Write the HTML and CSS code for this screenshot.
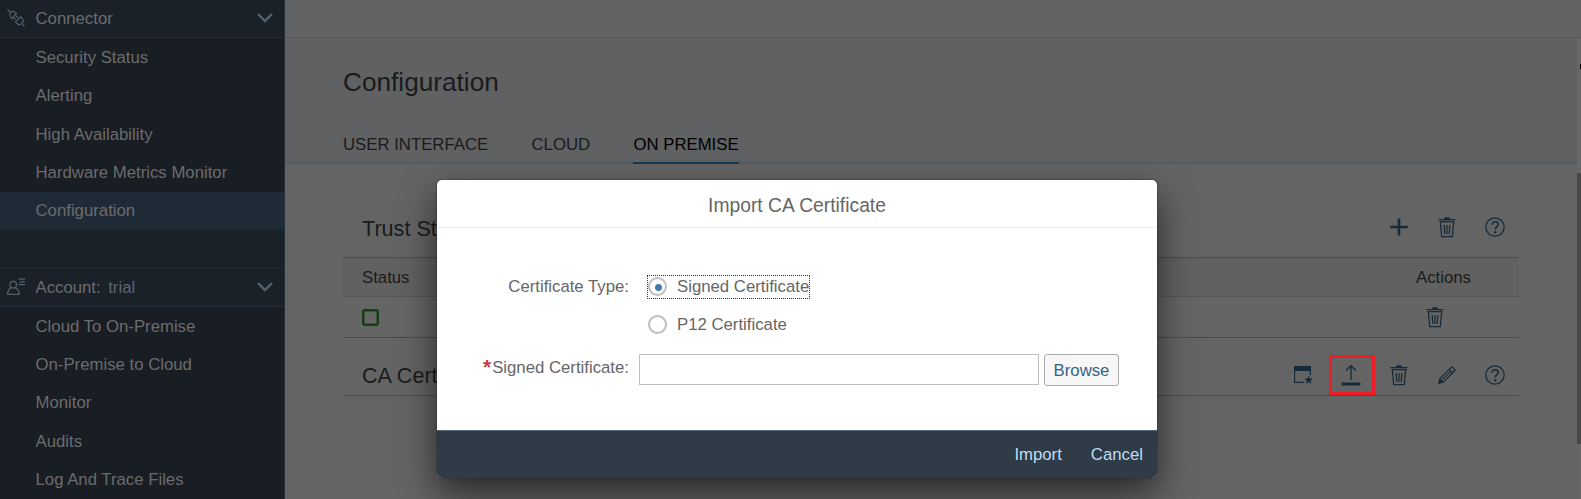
FILE: index.html
```html
<!DOCTYPE html>
<html lang="en">
<head>
<meta charset="utf-8">
<title>Configuration</title>
<link rel="stylesheet" href="styles.css">
</head>
<body>
<svg class="defs" width="0" height="0">
  <symbol id="trash" viewBox="0 0 20 22"><path d="M1.500 3.500h17M3.300 5.500l1.400 15h10.600L16.700 5.500M2.500 5.500h15M7.200 9l.6 9M10 9v9M12.800 9l-.6 9" fill="none" stroke="currentColor" stroke-width="1.250"/><path d="M7 3Q7 1.300 8.500 1.300h3Q13 1.300 13 3z" fill="currentColor"/></symbol>
  <symbol id="help" viewBox="0 0 20 20"><circle cx="10" cy="10" r="9.200" fill="none" stroke="currentColor" stroke-width="1.200"/><path d="M7 7.800C7 3.700 13.200 4 13.200 7.500C13.200 9.800 10.200 9.500 10.200 12.600" fill="none" stroke="currentColor" stroke-width="1.500"/><circle cx="10.200" cy="15.300" r="1.200" fill="currentColor"/></symbol>
</svg>
<div class="app">
  <nav class="sidebar">
    <div class="group">
      <svg class="group-icon" width="18" height="18" viewBox="0 0 18 18" fill="none" stroke="currentColor" stroke-width="1.200"><path d="M.5.5l2.500 2.500M3 6.500C2 4 4.200 1.800 7 2.600L9.300 5 5.200 9.500zM9.300 5l-.2-1.500M5.200 9.500l-1.200.2M7 9l1.700 1.600M9.200 7l1.700 1.500M15.300 15.300l2.200 2.200M8.500 12.900l5-5 2.400 2.500c1 3-1.800 5.800-4.700 5zM8.300 12.700l1 1M13 7.800l1.200.3"/></svg>
      <span class="group-title">Connector</span>
      <svg class="chevron" width="16" height="10" viewBox="0 0 16 10"><path d="M1 1l7 7 7-7" fill="none" stroke="currentColor" stroke-width="2.400"/></svg>
    </div>
    <ul class="items">
      <li>Security Status</li><li>Alerting</li><li>High Availability</li><li>Hardware Metrics Monitor</li><li class="selected">Configuration</li>
    </ul>
    <div class="group account">
      <svg class="group-icon" width="18" height="18" viewBox="0 0 18 18" fill="none" stroke="currentColor" stroke-width="1.200"><circle cx="6.200" cy="6.700" r="3.300"/><path d="M4.700 9.700C2 10.500.7 12.500.7 16.400h11.500C12.200 12.500 10.500 10.500 7.700 9.700M11.500 1.100H18M12.500 3.900H18M11.500 6.700H18"/></svg>
      <span class="group-title">Account:</span><span class="trial">trial</span>
      <svg class="chevron" width="16" height="10" viewBox="0 0 16 10"><path d="M1 1l7 7 7-7" fill="none" stroke="currentColor" stroke-width="2.400"/></svg>
    </div>
    <ul class="items fill">
      <li>Cloud To On-Premise</li><li>On-Premise to Cloud</li><li>Monitor</li><li>Audits</li><li>Log And Trace Files</li>
    </ul>
  </nav>
  <div class="main">
    <div class="topbar"></div>
    <div class="scroller">
      <div class="page">
        <header class="page-header">
          <h1>Configuration</h1>
          <div class="tabs"><span>USER INTERFACE</span><span>CLOUD</span><span class="active">ON PREMISE</span></div>
        </header>
        <section class="content">
          <div class="toolbar trust">
            <h2>Trust Store</h2>
            <span class="tool"><svg width="18" height="18" viewBox="0 0 18 18"><path d="M9 .5v17M.3 9h17.400" stroke="currentColor" stroke-width="2.600"/></svg></span>
            <span class="tool"><svg width="20" height="22"><use href="#trash"/></svg></span>
            <span class="tool"><svg width="20" height="20"><use href="#help"/></svg></span>
          </div>
          <div class="row head"><span>Status</span><span class="actions">Actions</span></div>
          <div class="row"><span class="status"></span><span class="actions icon"><svg width="20" height="22"><use href="#trash"/></svg></span></div>
          <div class="toolbar ca">
            <h2>CA Certificate</h2>
            <span class="tool"><svg width="20" height="20" viewBox="0 0 20 20"><path d="M1.600 2v15.300H11M17.300 4v6" fill="none" stroke="currentColor" stroke-width="1.200"/><path d="M1 1h17v5H1zM15.700 10.500l1.200 3 3.100.2-2.400 2 .8 3.200-2.700-1.800L13 18.900l.8-3.200-2.400-2 3.100-.2z" fill="currentColor"/></svg></span>
            <span class="tool upload"><svg width="20" height="22" viewBox="0 0 20 22"><path d="M10 16V2M5.200 6.500L10 1.700l4.800 4.800" fill="none" stroke="currentColor" stroke-width="1.300"/><rect x=".5" y="18.500" width="19" height="3" rx="1" fill="currentColor"/></svg></span>
            <span class="tool"><svg width="20" height="22"><use href="#trash"/></svg></span>
            <span class="tool"><svg width="18" height="18" viewBox="0 0 18 18" fill="none" stroke="currentColor" stroke-width="1.200"><path d="M1.900 12.600L13.800.8l3.400 3.400L5.400 16.100M11.200 3.400l3.400 3.400M4.200 13.900l8.700-8.700"/><path d="M1.900 13L.6 17.400 5 16.100z" fill="currentColor"/></svg></span>
            <span class="tool"><svg width="20" height="20"><use href="#help"/></svg></span>
          </div>
        </section>
      </div>
      <div class="scrollbar"><div class="mark"></div><div class="thumb"></div></div>
    </div>
  </div>
</div>
<div class="dialog" role="dialog">
  <div class="dialog-title">Import CA Certificate</div>
  <div class="form">
    <span class="label">Certificate Type:</span>
    <div class="radios">
      <span class="radio focused"><i class="ring on"></i>Signed Certificate</span>
      <span class="radio"><i class="ring"></i>P12 Certificate</span>
    </div>
    <div class="label file-label">
      <b>*</b>
      <span>Signed Certificate:</span>
    </div>
    <div class="file"><input class="input" type="text" aria-label="Signed Certificate"><button class="browse">Browse</button></div>
  </div>
  <div class="dialog-footer"><span>Import</span><span>Cancel</span></div>
</div>
</body>
</html>
```
FILE: styles.css
```css
* { box-sizing: border-box; }
body { margin: 0; width: 1581px; height: 499px; overflow: hidden; font: 16.75px "Liberation Sans", Arial, sans-serif; }
.defs { position: absolute; }
svg { display: block; flex: none; }
.app { display: flex; height: 499px; }

.sidebar { width: 285px; flex: none; display: flex; flex-direction: column; background: #1a2129; border-right: 1px solid #22303c; color: #6b6c6d; }
.group { height: 38px; display: flex; align-items: center; padding: 0 11px 1px 7px; border-bottom: 1px solid #232e38; }
.group-icon { color: #536271; margin-right: 10.500px; }
.chevron { margin-left: auto; color: #566370; width: 16px; }
.trial { margin-left: 7.500px; color: #5b6672; }
.account { height: 40px; margin-top: 37px; padding-bottom: 0; border-top: 1px solid #202a34; }
.group-title, .trial { padding-top: 1px; }
.account .group-title, .account .trial { padding-top: 2px; }
.items { list-style: none; margin: 0; padding: 0; background: #191d24; }
.items li { height: 38.4px; line-height: 39.4px; padding-left: 35.500px; }
.items .selected { background: #1e2b36; line-height: 38.4px; }
.items.fill { flex: 1; }
.items.fill li { height: 38.2px; line-height: 39px; }

.main { flex: 1; display: flex; flex-direction: column; background: #646464; color: #1a1b1c; min-width: 0; }
.topbar { height: 38px; flex: none; background: #616364; border-bottom: 1px solid #56585a; }
.scroller { flex: 1; display: flex; min-height: 0; }
.page { flex: 1; }
.page-header { height: 126px; background: #606163; border-bottom: 2px solid #535c65; padding: 29px 58px 0; }
h1 { margin: 0; font-size: 26.200px; line-height: 30px; font-weight: 400; }
.tabs { display: flex; gap: 43.300px; margin-top: 28px; height: 39px; line-height: 40px; white-space: nowrap; }
.tabs .active { color: #000; border-bottom: 2px solid #1a3850; }
.content { padding: 36px 58px 0; }
.toolbar { display: flex; align-items: center; border-bottom: 1px solid #4b4b4b; padding-left: 19px; color: #172a3a; }
.trust { height: 58px; }
.trust .tool { padding-bottom: 3px; }
.ca { height: 58px; padding-top: 17px; }
h2 { margin: 0 auto 0 0; font-size: 21.600px; line-height: 26px; font-weight: 400; color: #1a1b1c; }
.ca h2 { padding-top: 1px; }
.tool { width: 48px; display: flex; justify-content: center; }
.row { height: 41px; display: flex; align-items: center; justify-content: space-between; padding: 0 48px 0 19px; border-bottom: 1px solid #4b4b4b; background: #656565; }
.head { height: 39px; padding-top: 2px; background: #616161; border-bottom-color: #565656; }
.status { width: 17px; height: 17px; border: 2.500px solid #123e12; border-radius: 3px; box-shadow: inset 0 0 0 .5px #123e12; }
.icon { color: #172a3a; margin-right: 26px; }
.upload { width: 46px; height: 40px; margin: 0 0 0 2px; padding-right: 2px; border: 3px solid #ee1c24; align-items: center; }
.scrollbar { width: 4px; background: #666; }
.mark { width: 1px; height: 5px; margin: 26px 0 104px 3px; background: #000; }
.thumb { height: 271px; background: #484848; }

.dialog { position: absolute; left: 437px; top: 180px; width: 720px; height: 298px; display: flex; flex-direction: column; background: #fff; border-radius: 5px; box-shadow: 0 15px 36px rgba(0,0,0,.6), 0 0 2px rgba(0,0,0,.5); color: #666; overflow: hidden; }
.dialog-title { height: 48px; line-height: 52px; text-align: center; font-size: 19.300px; border-bottom: 1px solid #ededed; }
.form { flex: 1; display: grid; grid-template-columns: 192px 1fr; grid-template-rows: 79px 32px; column-gap: 10px; padding: 47px 38px 0 0; }
.label { text-align: right; line-height: 24px; white-space: nowrap; }
.file-label { padding-top: 2px; display: flex; justify-content: flex-end; align-items: flex-start; }
.label b { color: #c43d3d; font-size: 21px; line-height: 22px; margin-right: 1px; }
.radios { display: flex; flex-direction: column; align-items: flex-start; gap: 14px; padding: 0 0 0 8px; }
.radio { display: flex; align-items: center; height: 24px; border: 1px solid transparent; white-space: nowrap; }
.focused { border: 1px dotted #333; }
.ring { width: 19px; height: 19px; border: 2px solid #bfbfbf; border-radius: 50%; margin: 0 10px 2px 0; display: grid; place-items: center; }
.on::after { content: ""; width: 7px; height: 7px; margin: 2px 0 0 2px; border-radius: 50%; background: #427cac; }
.file { display: flex; gap: 5px; }
.input { width: 400px; height: 31px; border: 1px solid #bfbfbf; padding: 0 8px; background: #fff; font: inherit; }
.browse { width: 75px; height: 32px; border: 1px solid #ababab; border-radius: 3px; background: #f7f7f7; color: #346187; font: inherit; padding: 1px 0 0; }
.dialog-footer { height: 48px; background: #2f3c48; border-top: 1px solid #506578; display: flex; justify-content: flex-end; gap: 29px; padding-right: 14px; line-height: 47px; color: #bfdbf2; }
```
